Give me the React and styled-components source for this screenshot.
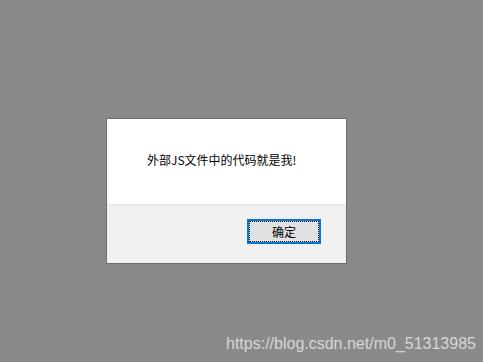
import React from "react";
import styled, { createGlobalStyle } from "styled-components";

const Global = createGlobalStyle`
  html, body { margin: 0; padding: 0; }
  body { background: #8a8a8a; width: 483px; height: 362px; overflow: hidden; }
`;

const Page = styled.div`
  position: relative;
  width: 483px;
  height: 362px;
  box-sizing: border-box;
  padding: 118px 0 0 106px;
  background: #8a8a8a;
`;

const Dialog = styled.div`
  width: 241px;
  height: 146px;
  box-sizing: border-box;
  border: 1px solid #6e6e6e;
  background: #f0f0f0;
  display: flex;
  flex-direction: column;
  font-family: "Noto Sans CJK SC", "Liberation Sans", sans-serif;
`;

const Body = styled.div`
  height: 86px;
  background: #ffffff;
  border-bottom: 1px solid #e3e3e3;
  display: flex;
  align-items: center;
  padding: 0 0 5px 40px;
  box-sizing: border-box;
`;

const Message = styled.span`
  font-size: 12px;
  color: #000;
`;

const Footer = styled.div`
  flex: 1;
  display: flex;
  justify-content: flex-end;
  align-items: flex-start;
  padding: 14px 25px 0 0;
`;

const Button = styled.button`
  width: 74px;
  height: 25px;
  box-sizing: border-box;
  border: 2px solid #0078d7;
  background: #e1e1e1;
  outline: 1px dotted #000;
  outline-offset: -3px;
  font-family: "Noto Sans CJK SC", sans-serif;
  font-size: 12px;
  color: #000;
  padding: 0;
  display: flex;
  align-items: center;
  justify-content: center;
`;

const Watermark = styled.div`
  position: absolute;
  left: 226px;
  top: 335px;
  font-family: "Liberation Sans", Arial, sans-serif;
  font-size: 16px;
  color: rgba(235, 235, 235, 0.8);
  white-space: nowrap;
`;

export default function App() {
  return (
    <Page>
      <Global />
      <Dialog>
        <Body>
          <Message>外部JS文件中的代码就是我!</Message>
        </Body>
        <Footer>
          <Button>确定</Button>
        </Footer>
      </Dialog>
      <Watermark>https://blog.csdn.net/m0_51313985</Watermark>
    </Page>
  );
}
